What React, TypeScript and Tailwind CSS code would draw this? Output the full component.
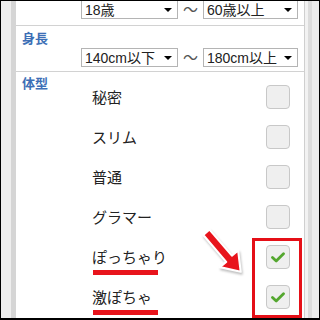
import { ReactNode } from "react";

const FONT = { fontFamily: '"Liberation Sans", "Noto Sans CJK JP", sans-serif' };

function Select({ label, w }: { label: string; w: string }) {
	return (
		<div className={`flex items-center justify-between h-[19px] ${w} border border-[#b4b4b4] bg-white pl-[3px] pr-[5px]`}>
			<span className="text-[14px] leading-none text-[#222]">{label}</span>
			<span className="w-0 h-0 border-l-[4px] border-r-[4px] border-t-[4px] border-l-transparent border-r-transparent border-t-black" />
		</div>
	);
}

function Range({ from, to }: { from: string; to: string }) {
	return (
		<div className="flex items-center pl-[65px]">
			<Select label={from} w="w-[97px]" />
			<span className="w-[25px] text-center text-[15px] leading-none text-[#555]">～</span>
			<Select label={to} w="w-[95px]" />
		</div>
	);
}

function Check({ on }: { on?: boolean }) {
	return (
		<div className="flex items-center justify-center w-[24px] h-[24px] rounded-[4px] border border-[#c8c8c8] bg-[#efefef]">
			{on && (
				<svg width="14" height="11" viewBox="0 0 14 11">
					<path d="M1.5 5.5 L5.2 9 L12.5 1.8" fill="none" stroke="#54a72f" strokeWidth="2.8" strokeLinecap="round" strokeLinejoin="round" />
				</svg>
			)}
		</div>
	);
}

function Option({ label, on, mark }: { label: string; on?: boolean; mark?: boolean }) {
	return (
		<div className="flex items-center justify-between h-[40px] pr-[14px]">
			<span className="relative text-[15px] leading-none text-[#222]">
				{label}
				{mark && <span className="absolute left-[1px] top-[20px] w-[65px] h-[5px] bg-[#e8141c]" />}
			</span>
			<Check on={on} />
		</div>
	);
}

function Label({ children }: { children: ReactNode }) {
	return <div className="text-[13px] leading-[16px] font-bold text-[#3d6fb6]">{children}</div>;
}

export default function App() {
	const types = [
		{ label: "秘密" },
		{ label: "スリム" },
		{ label: "普通" },
		{ label: "グラマー" },
		{ label: "ぽっちゃり", on: true, mark: true },
		{ label: "激ぽちゃ", on: true, mark: true },
	];

	return (
		<div className="relative w-[320px] h-[320px] overflow-hidden border-t border-l border-r border-b-2 border-black flex bg-white" style={FONT}>
			<div className="flex shrink-0">
				<div className="w-[10px] bg-[#eeeeee]" />
				<div className="w-[5px] bg-[#d5d5d5]" />
			</div>

			<div className="flex flex-col flex-1">
				<div className="flex items-end h-[25px] pb-[6px] border-b border-[#d2d2d2]">
					<Range from="18歳" to="60歳以上" />
				</div>

				<div className="flex flex-col h-[46px] pt-[5px] pl-[6px] border-b border-[#d2d2d2]">
					<Label>身長</Label>
					<div className="mt-[1px] -ml-[6px]">
						<Range from="140cm以下" to="180cm以上" />
					</div>
				</div>

				<div className="flex flex-row">
					<div className="w-[76px] pl-[6px] pt-[4px]">
						<Label>体型</Label>
					</div>
					<div className="flex flex-col flex-1 pt-[5px]">
						{types.map((t) => (
							<Option key={t.label} {...t} />
						))}
					</div>
				</div>
			</div>

			<div className="flex shrink-0">
				<div className="w-[1px] bg-[#cfcfcf]" />
				<div className="w-[3px] bg-[#f2f2f2]" />
				<div className="w-[4px] bg-[#dcdcdc]" />
				<div className="w-[7px] bg-[#ececec]" />
			</div>

			{/* annotation overlays */}
			<div className="absolute left-[251px] top-[237px] w-[50px] h-[80px] border-[3px] border-[#e50f17]" />
			<svg className="absolute left-[196px] top-[224px]" width="50" height="52" viewBox="0 0 48 50" style={{ filter: "drop-shadow(1px 2px 1px rgba(0,0,0,0.25))" }}>
				<polygon
					points="12,4.4 33.5,29.5 39.5,24.5 42,45 22,40.5 28,35.5 6,9.6"
					fill="#e8141c"
					stroke="white"
					strokeWidth="2"
					strokeLinejoin="round"
				/>
			</svg>
		</div>
	);
}
